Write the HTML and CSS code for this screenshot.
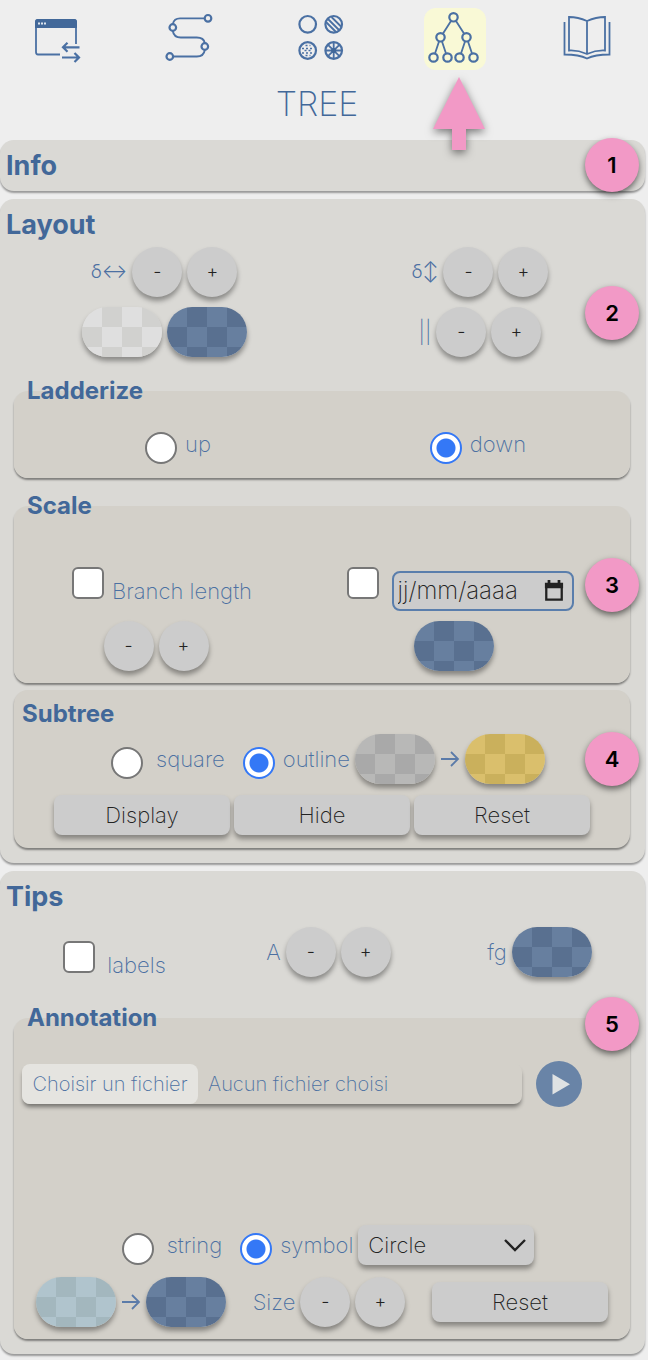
FILE: index.html
```html
<!DOCTYPE html>
<html lang="en">
<head>
<meta charset="utf-8">
<meta name="viewport" content="width=device-width, initial-scale=1">
<title>Tree</title>
<link rel="stylesheet" href="styles.css">
</head>
<body>
<nav class="tabs" aria-label="Sections">
  <button class="tab" type="button" aria-label="Window">
    <svg class="icon" viewBox="0 0 62 62">
      <path d="M50 36V14q0-2-2-2H12q-2 0-2 2v30q0 2.500 2 2.500h22"/>
      <path class="solid" d="M9 20v-6q0-3 3-3h36q3 0 3 3v6z"/>
      <path class="dots" d="M12 15.500h8"/>
      <path class="bold" d="M53.500 39.300H37m4.500-4.500L37 39.300l4.500 4.500M36 49.500h17m-4.500-4.500 4.500 4.500-4.500 4.500"/>
    </svg>
  </button>
  <button class="tab" type="button" aria-label="Path">
    <svg class="icon" viewBox="0 0 62 62">
      <path d="M45.500 10.300H21Q15 10.300 13.800 16M13.800 23q1 6.500 8 6.500h16q7 0 8 5.500M45.800 42q-1 6.500-8 6.500H14.500"/>
      <circle class="bold" cx="49" cy="10.300" r="3.300"/><circle class="bold" cx="13.800" cy="19.500" r="3.300"/>
      <circle class="bold" cx="45.800" cy="38.500" r="3.300"/><circle class="bold" cx="10.800" cy="48.500" r="3.300"/>
    </svg>
  </button>
  <button class="tab" type="button" aria-label="Patterns">
    <svg class="icon" viewBox="0 0 62 62">
      <circle class="bold" cx="16.700" cy="16.300" r="8.300"/>
      <circle class="bold" cx="42.700" cy="16.300" r="8.300"/>
      <path d="M35 14l10 10M36.500 10.500l12 12M40.500 9l10 10"/>
      <circle class="bold" cx="16.700" cy="42.500" r="8.300"/>
      <path class="spots" d="M14.500 37.500h5M11 40.500h12M13.500 42.500h8M11 45h12M14.500 47.500h5"/>
      <circle class="bold" cx="42.700" cy="42.500" r="8.300"/>
      <path d="M42.700 34.500v16M34.700 42.500h16M37 36.800l11.400 11.400M48.400 36.800L37 48.200"/>
      <circle class="solid" cx="42.700" cy="42.500" r="2.500"/>
    </svg>
  </button>
  <button class="tab tab-active" type="button" aria-label="Tree" aria-current="page">
    <svg class="icon" viewBox="0 0 62 62">
      <path d="M27 13L19 25.500M32 13l8 12.500M15 33.500l-4 12M18 33.500l4 12M41 33.500l-4 12M44 33.500l4 12"/>
      <circle class="bold" cx="29.500" cy="9.300" r="4.200"/><circle class="bold" cx="16.500" cy="29.300" r="4.200"/><circle class="bold" cx="42.500" cy="29.300" r="4.200"/>
      <circle class="bold" cx="9.500" cy="49.500" r="4.200"/><circle class="bold" cx="23.500" cy="49.500" r="4.200"/><circle class="bold" cx="35.500" cy="49.500" r="4.200"/><circle class="bold" cx="49.500" cy="49.500" r="4.200"/>
    </svg>
    <svg class="pointer" viewBox="0 0 52 73"><path d="M26 0L52 52H33V73H19V52H0z"/></svg>
  </button>
  <button class="tab" type="button" aria-label="Guide">
    <svg class="icon" viewBox="0 0 62 62">
      <path d="M31 13Q22 9 13 9V42.500Q22 42 31 46Q40 42 49 42.500V9Q40 9 31 13V46M8.500 14V46.500Q23 46.500 31 50.500Q39 46.500 53.500 46.500V14"/>
    </svg>
  </button>
</nav>
<h1 class="title">TREE</h1>

<main class="panels">
  <section class="panel">
    <h2 class="heading">Info</h2>
    <span class="badge badge-info">1</span>
  </section>

  <section class="panel">
    <h2 class="heading">Layout</h2>
    <span class="badge badge-layout">2</span>
    <div class="pair">
      <div class="group">
        <span class="delta">δ↔</span>
        <button class="round" type="button" aria-label="Narrower">-</button>
        <button class="round" type="button" aria-label="Wider">+</button>
      </div>
      <div class="group">
        <span class="delta">δ↕</span>
        <button class="round" type="button" aria-label="Shorter">-</button>
        <button class="round" type="button" aria-label="Taller">+</button>
      </div>
      <div class="group">
        <input class="swatch swatch-light" type="color" value="#e0e0e0" aria-label="Background colour">
        <input class="swatch" type="color" value="#446a9b" aria-label="Foreground colour">
      </div>
      <div class="group">
        <span>||</span>
        <button class="round" type="button" aria-label="Thinner">-</button>
        <button class="round" type="button" aria-label="Thicker">+</button>
      </div>
    </div>

    <fieldset class="box ladder">
      <legend class="subheading">Ladderize</legend>
      <div class="ladder-row">
        <label class="choice"><input class="radio" type="radio" name="ladder">up</label>
        <label class="choice"><input class="radio" type="radio" name="ladder" checked>down</label>
      </div>
    </fieldset>

    <fieldset class="box scale">
      <legend class="subheading">Scale</legend>
      <span class="badge badge-scale">3</span>
      <div class="scale-row">
        <label class="check check-length"><input class="tick" type="checkbox">Branch length</label>
        <div class="check check-date">
          <input class="tick" type="checkbox" aria-label="Use date">
          <span class="date">
            <input class="date-text" type="text" placeholder="jj/mm/aaaa" aria-label="Date">
            <button class="date-open" type="button" aria-label="Open calendar">
              <svg class="calendar" viewBox="0 0 22 24"><path class="frame" d="M2.500 4.500h17v17h-17z"/><path class="top" d="M1 3h20v6H1zM4 0h3v4H4zM15 0h3v4h-3z"/></svg>
            </button>
          </span>
        </div>
      </div>
      <div class="scale-tools">
        <div class="group scale-steps">
          <button class="round" type="button" aria-label="Smaller scale">-</button>
          <button class="round" type="button" aria-label="Larger scale">+</button>
        </div>
        <div class="group"><input class="swatch" type="color" value="#446a9b" aria-label="Scale colour"></div>
      </div>
    </fieldset>

    <section class="box subtree">
      <h3 class="subheading">Subtree</h3>
      <span class="badge badge-subtree">4</span>
      <div class="group">
        <label class="choice choice-wide"><input class="radio" type="radio" name="shape">square</label>
        <label class="choice next"><input class="radio" type="radio" name="shape" checked>outline</label>
        <input class="swatch swatch-gray" type="color" value="#b0b0b0" aria-label="From colour">
        <svg class="to" viewBox="0 0 20 16"><path d="M1 8h17M11 1l7 7-7 7"/></svg>
        <input class="swatch swatch-gold" type="color" value="#dcc068" aria-label="To colour">
      </div>
      <div class="actions">
        <button class="button" type="button">Display</button>
        <button class="button" type="button">Hide</button>
        <button class="button" type="button">Reset</button>
      </div>
    </section>
  </section>

  <section class="panel">
    <h2 class="heading">Tips</h2>
    <div class="triple">
      <label class="check check-labels"><input class="tick" type="checkbox">labels</label>
      <div class="group">
        <span>A</span>
        <button class="round" type="button" aria-label="Smaller text">-</button>
        <button class="round" type="button" aria-label="Larger text">+</button>
      </div>
      <label class="group"><span>fg</span><input class="swatch" type="color" value="#446a9b"></label>
    </div>

    <fieldset class="box notes">
      <legend class="subheading">Annotation</legend>
      <span class="badge badge-notes">5</span>
      <div class="upload">
        <label class="file">
          <input class="file-input" type="file">
          <span class="file-button">Choisir un fichier</span>
          <span class="file-name">Aucun fichier choisi</span>
        </label>
        <button class="play" type="button" aria-label="Run">
          <svg class="play-icon" viewBox="0 0 46 46"><path d="M16.500 13v20.500l17.500-10.300z"/></svg>
        </button>
      </div>
      <div class="group mark">
        <label class="choice choice-wide"><input class="radio" type="radio" name="mark">string</label>
        <label class="choice next"><input class="radio" type="radio" name="mark" checked>symbol</label>
        <span class="select">
          <select class="select-box" aria-label="Symbol"><option>Circle</option></select>
          <svg class="chevron" viewBox="0 0 22 14"><path d="M1 2l10 10L21 2"/></svg>
        </span>
      </div>
      <div class="footer">
        <div class="group">
          <input class="swatch swatch-sky" type="color" value="#b0c8d0" aria-label="From colour">
          <svg class="to" viewBox="0 0 20 16"><path d="M1 8h17M11 1l7 7-7 7"/></svg>
          <input class="swatch" type="color" value="#446a9b" aria-label="To colour">
        </div>
        <div class="group">
          <span>Size</span>
          <button class="round" type="button" aria-label="Smaller symbol">-</button>
          <button class="round" type="button" aria-label="Larger symbol">+</button>
        </div>
        <button class="button" type="button">Reset</button>
      </div>
    </fieldset>
  </section>
</main>
</body>
</html>
```
FILE: styles.css
```css
:root {
  --blue: #426899;
  --text: #4c70a2;
  --lift: 0 4px 5px rgba(0, 0, 0, 0.36);
}

* { box-sizing: border-box; }

body {
  margin: 0;
  background: #eee;
  color: var(--text);
  font: 200 22px/24px Inter, "Liberation Sans", sans-serif;
}

button, input, select { font: inherit; margin: 0; }
button { padding: 0; border: 0; cursor: pointer; }

.tabs { display: flex; justify-content: space-between; padding: 8px 30px 0 26px; }
.tab { position: relative; width: 62px; height: 62px; background: none; border-radius: 12px; }
.tab-active { background: #f9f9d6; }
.icon { display: block; width: 62px; height: 62px; fill: none; stroke: #4a70a3; stroke-width: 1.8; }
.icon .bold { stroke-width: 2.2; }
.icon .solid { fill: #426899; stroke: none; }
.icon .dots { stroke: #dde5ef; stroke-dasharray: 2 1; }
.icon .spots { stroke-width: 1.6; stroke-dasharray: 2 2; }
.pointer {
  position: absolute; z-index: 2; top: 69px; left: 9px; width: 52px; height: 73px;
  overflow: visible; fill: #f299c6; filter: drop-shadow(0 3px 4px rgba(0, 0, 0, 0.5));
}

.title {
  margin: 14px 14px 16px 0; text-align: center; color: #426899;
  font-size: 34px; font-weight: 200; line-height: 40px;
}

.panels { display: flex; flex-direction: column; gap: 8px; padding: 0 3px 7px 0; }
.panel {
  position: relative; padding: 8px 0 15px; border-radius: 14px;
  background: #dad9d5; box-shadow: 0 2px 2px rgba(0, 0, 0, 0.36);
}
.panel:first-child { padding-bottom: 7px; }
.heading { margin: 0 6px; color: var(--blue); font-size: 27px; font-weight: 700; line-height: 36px; }
.subheading { margin: 0; color: var(--blue); font-size: 24px; font-weight: 700; line-height: 32px; }
legend.subheading { padding: 0 5px; }

.box {
  position: relative; min-width: 0; margin: 0 15px 0 14px; padding: 0 8px; border: 0;
  border-radius: 14px; background: #d3d0c9; box-shadow: 0 2px 2px rgba(0, 0, 0, 0.42);
}

.group { display: flex; align-items: center; justify-content: center; gap: 5px; }
.pair { display: grid; grid-template-columns: 1fr 1fr; gap: 10px 0; margin-top: 4px; padding: 0 7px 0 6px; }
.delta { font-size: 19px; font-weight: 300; }

.round {
  flex: none; width: 50px; height: 50px; border-radius: 50%;
  background: #ccc; color: #222; box-shadow: var(--lift); font-size: 18px; font-weight: 300;
}
.swatch {
  --a: #677f9f; --b: #597090;
  appearance: none; flex: none; width: 80px; height: 50px; padding: 0; border: 0; border-radius: 25px;
  background: conic-gradient(var(--b) 25%, var(--a) 0 50%, var(--b) 0 75%, var(--a) 0) 0 0 / 40px 40px;
  box-shadow: var(--lift); cursor: pointer;
}
.swatch::-webkit-color-swatch-wrapper { opacity: 0; }
.swatch-light { --a: #dfdfdf; --b: #d1d1cf; }
.swatch-gray { --a: #b8b8b7; --b: #a9a9a9; }
.swatch-gold { --a: #dabf6c; --b: #cab05c; }
.swatch-sky { --a: #b0c4cd; --b: #a3b7be; }

.choice { display: flex; align-items: center; gap: 8px; cursor: pointer; }
.choice-wide { gap: 13px; }
.next { margin-left: 13px; }
.radio {
  appearance: none; flex: none; width: 32px; height: 32px; margin-top: 8px;
  border: 2px solid #777; border-radius: 50%; background: #fff;
}
.radio:checked { border-color: #3478f6; background: radial-gradient(circle, #3478f6 9px, #fff 10px); }
.tick {
  appearance: none; flex: none; width: 32px; height: 32px;
  border: 2px solid #777; border-radius: 6px; background: #fff;
}
.check { display: flex; align-items: baseline; justify-content: center; gap: 8px; }

.ladder { margin-top: 18px; padding: 17px 2px 14px 14px; }
.ladder .subheading { margin-left: -6px; }
.ladder-row { display: grid; grid-template-columns: 1fr 1fr; justify-items: center; }

.scale { margin-top: 12px; padding-top: 45px; padding-bottom: 12px; }
.scale-row { display: grid; grid-template-columns: 1fr 1fr; align-items: baseline; padding-right: 16px; }
.check-length { padding-right: 12px; }
.check-date { gap: 13px; }
.scale-tools { display: grid; grid-template-columns: 1fr 1fr; margin-top: 10px; padding-right: 24px; }
.scale-steps { padding-right: 20px; }
.date {
  display: flex; align-items: center; width: 182px; height: 40px; padding: 0 8px 0 4px;
  border: 2px solid #5a7eac; border-radius: 8px; background: #ccc;
}
.date-text { flex: 1; min-width: 0; padding: 0; border: 0; background: none; color: #222; font-size: 24px; }
.date-text::placeholder { color: #222; opacity: 1; }
.date-open { flex: none; width: 20px; height: 22px; background: none; }
.calendar { display: block; width: 20px; height: 22px; }
.calendar .frame { fill: none; stroke: #222; stroke-width: 2.5; }
.calendar .top { fill: #222; }

.subtree { margin-top: 7px; padding-top: 8px; padding-bottom: 13px; }
.subtree .group { margin: 4px 0 0 12px; }
.to { flex: none; width: 20px; height: 16px; fill: none; stroke: #5b7ba9; stroke-width: 1.8; }
.actions { display: flex; justify-content: center; gap: 4px; margin-top: 11px; }
.button {
  width: 176px; height: 40px; border-radius: 8px; background: #ccc; color: #222; box-shadow: var(--lift);
}

.triple { display: grid; grid-template-columns: 1fr 1fr 1fr; align-items: center; margin-top: 12px; padding-left: 12px; }
.check-labels { gap: 12px; padding-top: 14px; padding-right: 6px; }

.notes { margin-top: 25px; padding-top: 27px; padding-bottom: 12px; }
.upload { display: flex; align-items: center; gap: 14px; padding-right: 40px; }
.file {
  display: flex; flex: 1; align-items: center; gap: 10px; position: relative; height: 40px;
  border-radius: 8px; box-shadow: 0 4px 4px -1px rgba(0, 0, 0, 0.45); background: #d3d0c9; cursor: pointer;
  font-size: 20px;
}
.file-input { position: absolute; width: 1px; height: 1px; opacity: 0; }
.file-button { width: 176px; border-radius: 8px; background: #e5e4e0; line-height: 40px; text-align: center; white-space: nowrap; }
.file-name { white-space: nowrap; }
.play { flex: none; width: 46px; height: 46px; border-radius: 50%; background: #6984a7; }
.play-icon { display: block; width: 46px; height: 46px; fill: #dfe2e3; }

.mark { margin-top: 118px; padding-left: 12px; }
.select { position: relative; width: 176px; }
.select-box {
  appearance: none; display: block; width: 100%; height: 40px; padding: 0 10px;
  border: 0; border-radius: 8px; background: #ccc; color: #222; box-shadow: var(--lift);
}
.chevron {
  position: absolute; right: 8px; top: 13px; width: 22px; height: 14px;
  fill: none; stroke: #222; stroke-width: 2.4; pointer-events: none;
}
.footer { display: flex; align-items: center; justify-content: space-between; margin-top: 12px; padding: 0 14px; }

.badge {
  position: absolute; z-index: 1; right: -9px; width: 54px; height: 54px; border-radius: 50%;
  background: #f299c6; color: #000; box-shadow: 0 3px 6px rgba(0, 0, 0, 0.55);
  font-size: 22px; font-weight: 600; line-height: 54px; text-align: center;
}
.badge-info { top: -2px; right: 6px; }
.badge-layout { top: 87px; right: 6px; }
.badge-scale { top: 36px; }
.badge-subtree { top: 42px; }
.badge-notes { top: -37px; }
```
